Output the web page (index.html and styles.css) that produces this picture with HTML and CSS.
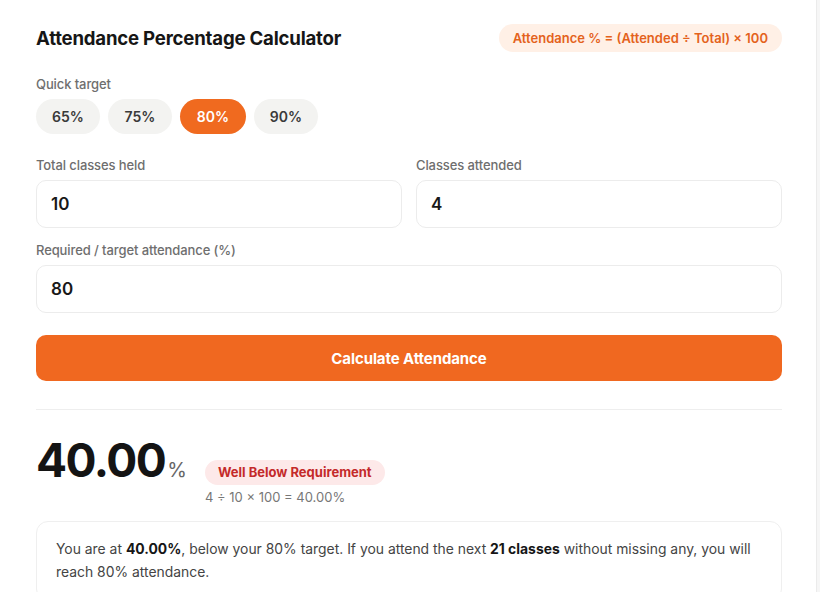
FILE: index.html
```html
<!DOCTYPE html>
<html lang="en">
<head>
<meta charset="utf-8">
<title>Attendance Percentage Calculator</title>
<link rel="stylesheet" href="styles.css">
</head>
<body>
<div class="card">
  <header class="head">
    <h1 class="title">Attendance Percentage Calculator</h1>
    <span class="formula">Attendance % = (Attended ÷ Total) × 100</span>
  </header>

  <div class="field">
    <span class="label">Quick target</span>
    <div class="chips">
      <button class="chip">65%</button>
      <button class="chip">75%</button>
      <button class="chip chip-active">80%</button>
      <button class="chip">90%</button>
    </div>
  </div>

  <div class="grid2">
    <div class="field">
      <span class="label">Total classes held</span>
      <div class="input">10</div>
    </div>
    <div class="field">
      <span class="label">Classes attended</span>
      <div class="input">4</div>
    </div>
  </div>

  <div class="field">
    <span class="label">Required / target attendance (%)</span>
    <div class="input">80</div>
  </div>

  <button class="calc">Calculate Attendance</button>

  <div class="divider"></div>

  <div class="result">
    <div class="big">40.00<span class="pct">%</span></div>
    <div class="meta">
      <span class="badge">Well Below Requirement</span>
      <span class="expr">4 ÷ 10 × 100 = 40.00%</span>
    </div>
  </div>

  <p class="msg">You are at <b>40.00%</b>, below your 80% target. If you attend the next <b>21 classes</b> without missing any, you will reach 80% attendance.</p>
</div>
</body>
</html>
```

FILE: styles.css
```css
* { box-sizing: border-box; }
html, body { margin: 0; padding: 0; }
body {
  background: #f6f6f6;
  font-family: Inter, "Noto Sans", sans-serif;
  color: #1a1a1a;
  height: 592px;
  overflow: hidden;
}
.card {
  width: 817px;
  min-height: 592px;
  background: #fff;
  border-right: 1px solid #ebebeb;
  padding: 24px 34px 0 36px;
  display: flex;
  flex-direction: column;
}
.head {
  display: flex;
  justify-content: space-between;
  align-items: center;
  height: 28px;
}
.title {
  margin: 0;
  font-size: 18.6px;
  font-weight: 700;
  letter-spacing: -0.2px;
  color: #161616;
}
.formula {
  background: #fff0e6;
  color: #e4621c;
  font-size: 13px;
  font-weight: 600;
  height: 28px;
  line-height: 28px;
  padding: 0 14px;
  border-radius: 14px;
}
.field {
  display: flex;
  flex-direction: column;
  gap: 7px;
}
.head + .field { margin-top: 24px; }
.label {
  font-size: 13px;
  line-height: 16px;
  color: #6e6e6e;
  font-weight: 500;
  letter-spacing: -0.1px;
}
.chips {
  display: flex;
  gap: 8px;
}
.chip {
  font-family: inherit;
  border: none;
  background: #f3f3f1;
  color: #3a3a3a;
  font-size: 14px;
  font-weight: 600;
  height: 35px;
  width: 64px;
  border-radius: 18px;
  padding: 0;
}
.chip-active {
  background: #f06a1f;
  color: #fff;
  width: 66px;
}
.grid2 {
  display: grid;
  grid-template-columns: 1fr 1fr;
  gap: 14px;
  margin-top: 23px;
}
.grid2 + .field { margin-top: 14px; }
.input {
  height: 48px;
  border: 1px solid #ececec;
  border-radius: 10px;
  padding: 0 14px;
  display: flex;
  align-items: center;
  font-size: 17px;
  font-weight: 600;
  color: #181818;
}
.calc {
  margin-top: 22px;
  height: 46px;
  border: none;
  border-radius: 10px;
  background: #f06820;
  color: #fff;
  font-family: inherit;
  font-size: 15px;
  font-weight: 700;
  letter-spacing: -0.1px;
  padding-top: 2px;
}
.divider {
  margin-top: 28px;
  height: 1px;
  background: #eeeeee;
}
.result {
  margin-top: 24px;
  display: flex;
  align-items: flex-start;
  gap: 18px;
}
.big {
  font-size: 46px;
  font-weight: 700;
  line-height: 52px;
  letter-spacing: -1.5px;
  color: #141414;
}
.pct {
  font-size: 20px;
  font-weight: 400;
  color: #666;
  letter-spacing: 0;
  margin-left: 2px;
}
.meta {
  display: flex;
  flex-direction: column;
  align-items: flex-start;
  gap: 4px;
  margin-top: 26px;
}
.badge {
  background: #fde9e9;
  color: #c42a2a;
  font-size: 13px;
  font-weight: 700;
  height: 25px;
  line-height: 25px;
  padding: 0 13px;
  border-radius: 13px;
}
.expr {
  font-size: 13px;
  line-height: 16px;
  color: #777;
}
.msg {
  margin: 16px 0 0;
  border: 1px solid #efefef;
  border-radius: 12px;
  padding: 16px 19px;
  font-size: 13.9px;
  line-height: 23px;
  color: #444;
}
.msg b { color: #161616; font-weight: 700; }
```
